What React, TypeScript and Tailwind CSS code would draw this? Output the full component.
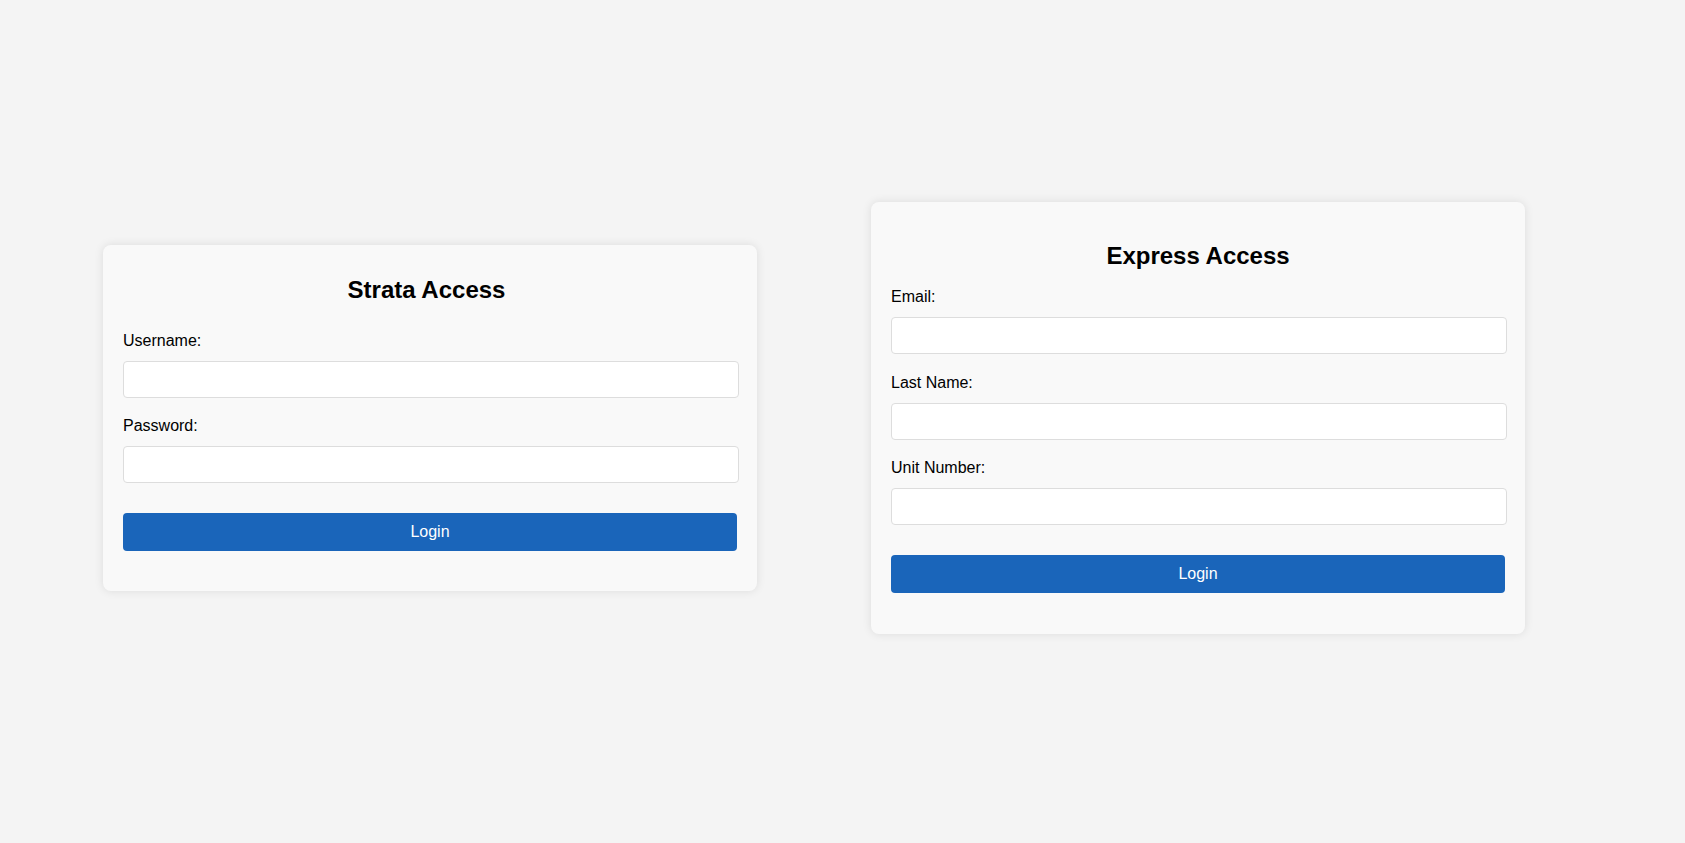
import React from 'react';

type Field = { id: string; label: string; type?: string };

function FormField({ field, first }: { field: Field; first: boolean }) {
  return (
    <div className={first ? '' : 'mt-[19.5px]'}>
      <label htmlFor={field.id} className="block text-[16px] leading-[18.4px] text-black mb-[10.5px]">
        {field.label}
      </label>
      <input
        id={field.id}
        type={field.type ?? 'text'}
        className="block w-[calc(100%+2px)] h-[37px] px-[8px] bg-white border border-[#dddddd] rounded-[4px] text-[16px] outline-none"
      />
    </div>
  );
}

function LoginCard({
  title,
  fields,
  titleClass,
}: {
  title: string;
  fields: Field[];
  titleClass: string;
}) {
  return (
    <form
      onSubmit={(e) => e.preventDefault()}
      className="w-[654px] shrink-0 bg-[#f9f9f9] rounded-[8px] p-[20px] shadow-[0_0_10px_rgba(0,0,0,0.1)]"
    >
      <h2 className={`text-center text-[24px] font-bold leading-[27px] text-black ${titleClass}`}>{title}</h2>
      {fields.map((f, i) => (
        <FormField key={f.id} field={f} first={i === 0} />
      ))}
      <button
        type="submit"
        className="mt-[30px] mb-[20.5px] w-full h-[38px] bg-[#1a65ba] text-white text-[16px] rounded-[4px]"
      >
        Login
      </button>
    </form>
  );
}

export default function App() {
  return (
    <div
      className="w-full h-screen bg-[#f4f4f4] flex items-center pl-[103px] pb-[7px] gap-[114px]"
      style={{ fontFamily: '"Liberation Sans", Arial, sans-serif' }}
    >
      <LoginCard
        title="Strata Access"
        titleClass="mt-[11px] mb-[29px] pr-[7px]"
        fields={[
          { id: 'username', label: 'Username:' },
          { id: 'password', label: 'Password:', type: 'password' },
        ]}
      />
      <LoginCard
        title="Express Access"
        titleClass="mt-[20px] mb-[19px]"
        fields={[
          { id: 'email', label: 'Email:', type: 'email' },
          { id: 'lastname', label: 'Last Name:' },
          { id: 'unit', label: 'Unit Number:' },
        ]}
      />
    </div>
  );
}
